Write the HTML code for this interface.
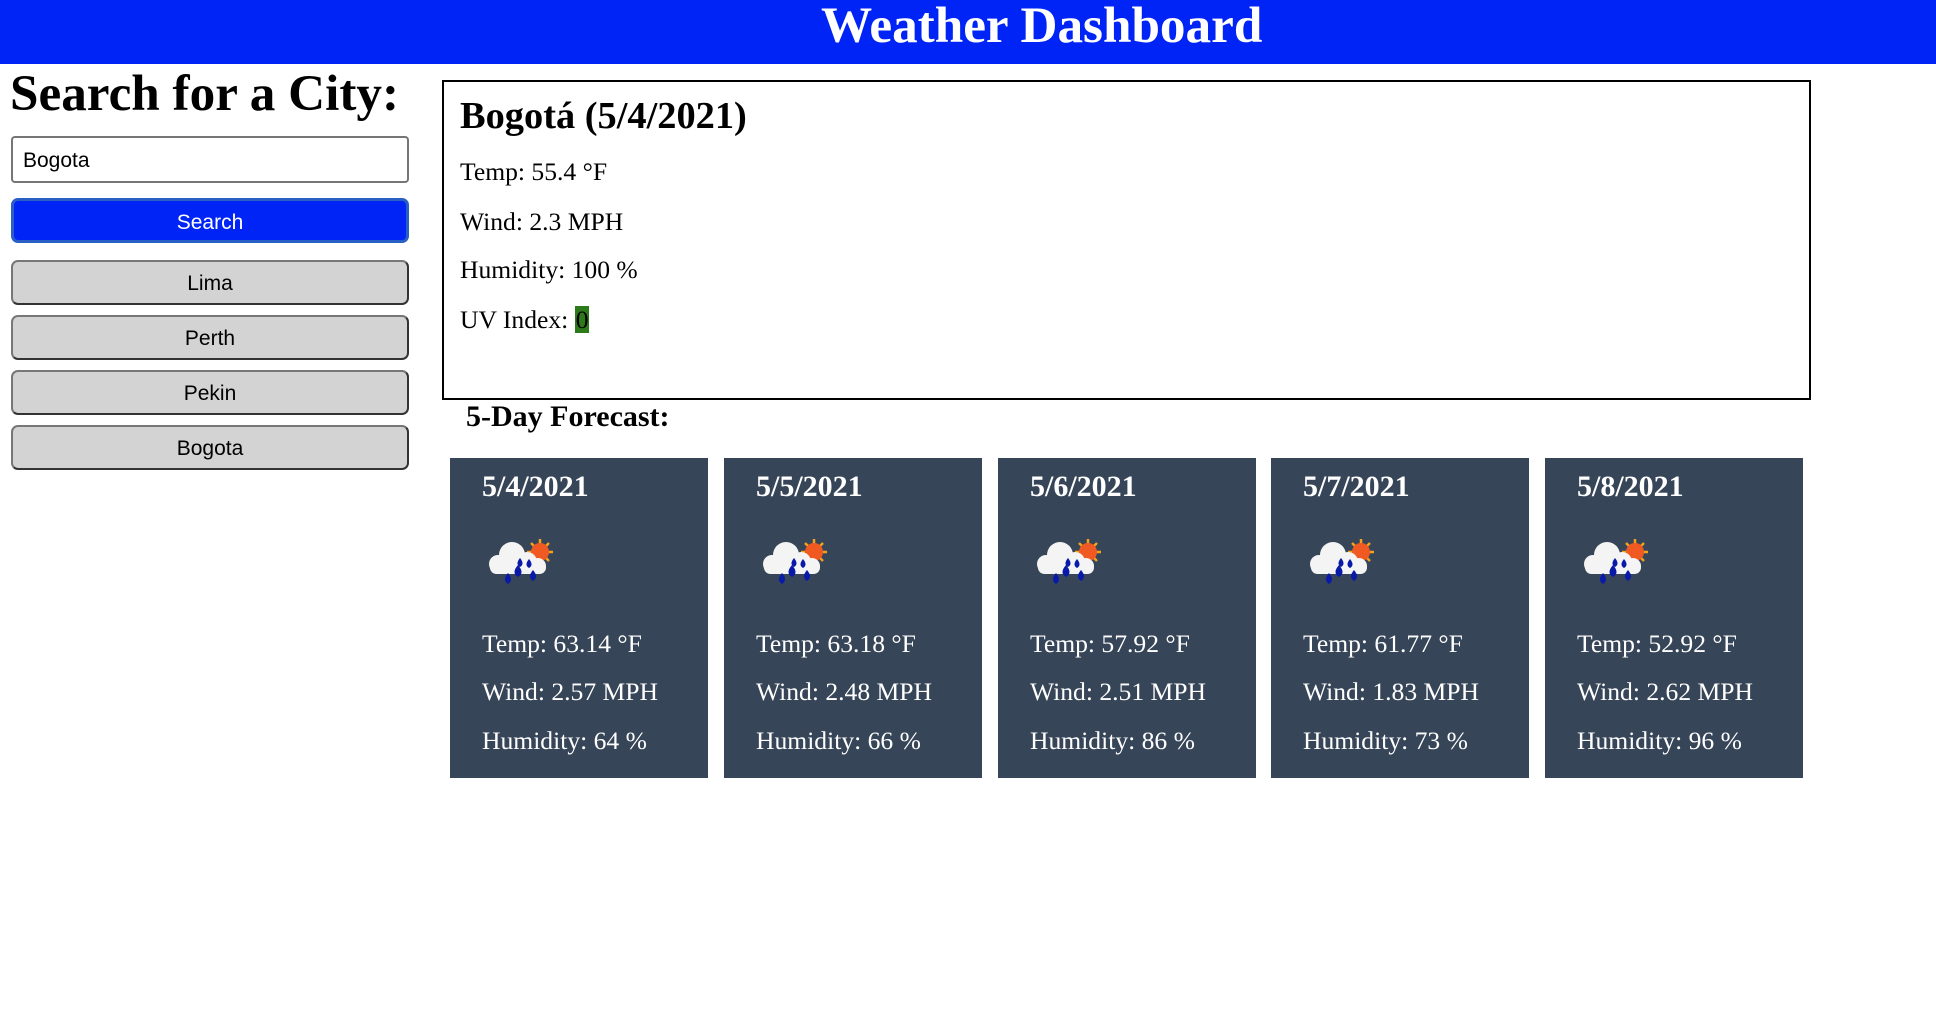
<!DOCTYPE html>
<html><head><meta charset="utf-8"><style>
*{margin:0;padding:0;box-sizing:border-box}
body{width:1936px;height:1024px;background:#fff;position:relative;overflow:hidden;font-family:"Liberation Serif",serif;color:#000}
.a{position:absolute;white-space:nowrap;line-height:1}
.hdr{position:absolute;left:0;top:0;width:1936px;height:64px;background:#0024f5}
.btn{position:absolute;left:11px;width:398px;height:45px;background:#d3d3d3;border:2px solid #444;border-radius:7px;font-family:"Liberation Sans",sans-serif;font-size:21px;text-align:center;line-height:43px;border-color:#777 #333 #333 #777}
.card{position:absolute;top:458px;width:258px;height:320px;background:#374558;color:#fff}
.card .a{left:32px}
.d{font-weight:bold;font-size:30px;top:14px}
.t{font-size:25.6px}
</style></head><body>
<div class="hdr"></div>
<div class="a" style="left:821px;top:0px;font-size:51.2px;font-weight:bold;color:#fff">Weather Dashboard</div>

<div class="a" style="left:10px;top:68px;font-size:51.2px;font-weight:bold">Search for a City:</div>
<div style="position:absolute;left:11px;top:136px;width:398px;height:47px;border:2px solid #767676;border-radius:4px;font-family:'Liberation Sans',sans-serif;font-size:21px;line-height:45px;padding-left:10px">Bogota</div>
<div style="position:absolute;left:11px;top:198px;width:398px;height:45px;background:#0024f5;border:3px solid #2a5fc4;border-radius:7px;font-family:'Liberation Sans',sans-serif;font-size:21px;color:#fff;text-align:center;line-height:43px">Search</div>
<div class="btn" style="top:260px">Lima</div>
<div class="btn" style="top:315px">Perth</div>
<div class="btn" style="top:370px">Pekin</div>
<div class="btn" style="top:425px">Bogota</div>

<div style="position:absolute;left:442px;top:80px;width:1369px;height:320px;border:2px solid #000"></div>
<div class="a" style="left:460px;top:97px;font-size:38.4px;font-weight:bold">Bogotá (5/4/2021)</div>
<div class="a t" style="left:460px;top:159px">Temp: 55.4 °F</div>
<div class="a t" style="left:460px;top:209px">Wind: 2.3 MPH</div>
<div class="a t" style="left:460px;top:257px">Humidity: 100 %</div>
<div class="a t" style="left:460px;top:306px">UV Index: <span style="background:#2c7a1a;display:inline-block;padding:0 1px;line-height:27px">0</span></div>
<div class="a" style="left:466px;top:402px;font-size:30px;font-weight:bold">5-Day Forecast:</div>

<svg width="0" height="0" style="position:absolute"><defs>
<g id="ic">
<g stroke="#f4a11c" stroke-width="2.5"><line x1="58" y1="6" x2="58" y2="32"/><line x1="45" y1="19" x2="71" y2="19"/><line x1="49" y1="10" x2="67" y2="28"/><line x1="49" y1="28" x2="67" y2="10"/></g>
<circle cx="58" cy="19" r="9" fill="#f05a22"/>
<g fill="#f4f4f4"><circle cx="30" cy="22" r="13"/><circle cx="16" cy="31" r="9"/><circle cx="45" cy="29" r="10"/><circle cx="56" cy="33" r="8"/><rect x="8" y="28" width="56" height="13" rx="6.5"/></g>
<g fill="#0a1aa8"><path d="M38 25q-5 6 0 9q5-3 0-9z"/><path d="M47 26q-5 6 0 9q5-3 0-9z"/><path d="M36 32q-7 8 0 12q7-4 0-12z"/><path d="M26 40q-6 7 0 11q6-4 0-11z"/><path d="M51 37q-6 7 0 11q6-4 0-11z"/></g>
</g></defs></svg>

<div class="card" style="left:450px"><div class="a d">5/4/2021</div><svg class="a" style="left:32px;top:75px" width="80" height="60"><use href="#ic"/></svg><div class="a t" style="top:173px">Temp: 63.14 °F</div><div class="a t" style="top:221px">Wind: 2.57 MPH</div><div class="a t" style="top:270px">Humidity: 64 %</div></div>
<div class="card" style="left:724px"><div class="a d">5/5/2021</div><svg class="a" style="left:32px;top:75px" width="80" height="60"><use href="#ic"/></svg><div class="a t" style="top:173px">Temp: 63.18 °F</div><div class="a t" style="top:221px">Wind: 2.48 MPH</div><div class="a t" style="top:270px">Humidity: 66 %</div></div>
<div class="card" style="left:998px"><div class="a d">5/6/2021</div><svg class="a" style="left:32px;top:75px" width="80" height="60"><use href="#ic"/></svg><div class="a t" style="top:173px">Temp: 57.92 °F</div><div class="a t" style="top:221px">Wind: 2.51 MPH</div><div class="a t" style="top:270px">Humidity: 86 %</div></div>
<div class="card" style="left:1271px"><div class="a d">5/7/2021</div><svg class="a" style="left:32px;top:75px" width="80" height="60"><use href="#ic"/></svg><div class="a t" style="top:173px">Temp: 61.77 °F</div><div class="a t" style="top:221px">Wind: 1.83 MPH</div><div class="a t" style="top:270px">Humidity: 73 %</div></div>
<div class="card" style="left:1545px"><div class="a d">5/8/2021</div><svg class="a" style="left:32px;top:75px" width="80" height="60"><use href="#ic"/></svg><div class="a t" style="top:173px">Temp: 52.92 °F</div><div class="a t" style="top:221px">Wind: 2.62 MPH</div><div class="a t" style="top:270px">Humidity: 96 %</div></div>
</body></html>
